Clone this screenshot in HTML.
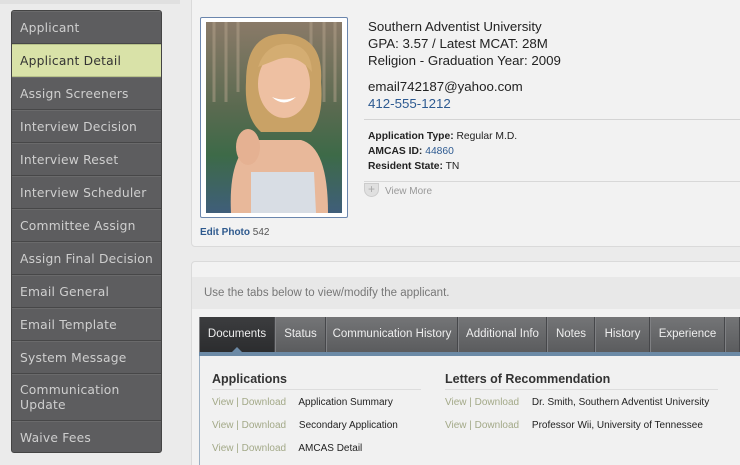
<!DOCTYPE html>
<html style="overflow:hidden;width:740px;height:465px"><head><style>
*{margin:0;padding:0;box-sizing:border-box}
body{width:740px;height:465px;overflow:hidden;background:#ebebeb;font-family:"Liberation Sans",Arial,sans-serif;position:relative}
.side{position:absolute;left:11px;top:10px;width:151px;height:443px;background:#5d5d5f;border:1px solid #444;border-radius:3px;overflow:hidden}
.side div{height:33px;border-bottom:1px solid #474748;border-top:1px solid #6a6a6b;color:#cfcfcf;font-family:"DejaVu Sans",sans-serif;font-size:12.3px;padding:9px 0 0 8px;letter-spacing:0.2px}
.side div.act{background:#d9e2a8;color:#333;border-color:#b8c28a}
.p1{position:absolute;left:191px;top:-4px;width:560px;height:251px;background:#f2f2f2;border:1px solid #dadada;border-radius:4px}
.p2{position:absolute;left:191px;top:261px;width:560px;height:220px;background:#f2f2f2;border:1px solid #dadada;border-radius:4px}
.hdr{position:absolute;left:192px;top:277px;width:548px;height:32px;background:#e8e8e8;color:#777;font-size:11.5px;padding:10px 0 0 12px}
.photo{position:absolute;left:200px;top:17px;width:148px;height:201px;border:1px solid #6b86ad;background:#fff;border-radius:2px}
.tabs{position:absolute;left:199px;top:317px;width:541px;height:36px;background:linear-gradient(#747577,#5a5b5d);display:flex}
.tabs span{color:#eee;font-size:11.5px;padding-top:11px;text-align:center;border-right:1px solid #46474a;border-left:1px solid #7f8083;height:36px;white-space:nowrap;flex:none}
.tabs span.a{background:linear-gradient(#3c3d3f,#2b2c2e);color:#eee}
.strip{position:absolute;left:199px;top:352px;width:541px;height:4px;background:#6c8aa6}
.cont{position:absolute;left:199px;top:356px;width:541px;height:110px;background:#f1f1f1;border-left:1px solid #9bb0c4}
h3{position:absolute;font-size:12.5px;color:#333;font-weight:bold}
.ln{position:absolute;height:1px;background:#ddd}
.r{position:absolute;font-size:10px;color:#222}
.r b{font-weight:normal;color:#a3a988;margin-right:10px}
.info{position:absolute;left:368px;font-size:13.3px;color:#222}
</style></head><body>
<div style="position:absolute;left:0;top:0;width:180px;height:4px;background:#e0e0e0"></div>
<div class="side">
<div>Applicant</div>
<div class="act">Applicant Detail</div>
<div>Assign Screeners</div>
<div>Interview Decision</div>
<div>Interview Reset</div>
<div>Interview Scheduler</div>
<div>Committee Assign</div>
<div>Assign Final Decision</div>
<div>Email General</div>
<div>Email Template</div>
<div>System Message</div>
<div style="height:47px;padding-top:8px;line-height:15px">Communication<br>Update</div>
<div style="border-bottom:none">Waive Fees</div>
</div>
<div class="p1"></div>
<div class="photo">
<svg width="136" height="191" style="position:absolute;left:5px;top:4px" viewBox="0 0 136 191">
<defs><linearGradient id="bg" x1="0" y1="0" x2="0" y2="1"><stop offset="0" stop-color="#8a7a68"/><stop offset="0.45" stop-color="#5a6a50"/><stop offset="0.7" stop-color="#3d6a48"/><stop offset="1" stop-color="#3f5e7a"/></linearGradient></defs>
<rect width="136" height="191" fill="url(#bg)"/>
<g stroke="#b4a38c" stroke-width="3" opacity="0.5"><line x1="8" y1="0" x2="8" y2="80"/><line x1="20" y1="0" x2="20" y2="80"/><line x1="32" y1="0" x2="32" y2="70"/><line x1="105" y1="0" x2="105" y2="80"/><line x1="118" y1="0" x2="118" y2="80"/><line x1="129" y1="0" x2="129" y2="80"/></g>
<path d="M25 191 Q22 130 50 118 L95 118 Q122 125 122 191Z" fill="#e8b89a"/>
<path d="M45 150 L108 150 L110 191 L45 191Z" fill="#d8dde4"/>
<path d="M40 60 Q40 10 80 12 Q118 15 115 60 Q118 95 105 110 L55 110 Q38 95 40 60Z" fill="#c9a266"/>
<ellipse cx="78" cy="62" rx="26" ry="34" fill="#eec0a2"/>
<path d="M52 45 Q60 20 85 22 Q105 25 106 50 Q90 30 70 38Z" fill="#d4ad72"/>
<path d="M66 75 Q78 86 90 75 Q78 80 66 75Z" fill="#fff"/>
<ellipse cx="42" cy="125" rx="12" ry="18" fill="#e5b192"/>
</svg>
</div>
<div style="position:absolute;left:200px;top:227px;font-size:10px;color:#2f5a8e;font-weight:bold">Edit Photo <span style="color:#555;font-weight:normal">542</span></div>
<div class="info" style="top:18px;line-height:17px">Southern Adventist University<br>GPA: 3.57 / Latest MCAT: 28M<br>Religion - Graduation Year: 2009</div>
<div class="info" style="top:78px;line-height:17px">email742187@yahoo.com<br><span style="color:#2d5a91">412-555-1212</span></div>
<div class="ln" style="left:364px;top:119px;width:376px;background:#d4d4d4"></div>
<div style="position:absolute;left:368px;top:129px;font-size:10.3px;color:#222;line-height:15px"><b>Application Type:</b> Regular M.D.<br><b>AMCAS ID:</b> <span style="color:#2d5a91">44860</span><br><b>Resident State:</b> TN</div>
<div class="ln" style="left:364px;top:181px;width:376px;background:#d8d8d8"></div>
<div style="position:absolute;left:364px;top:183px;width:15px;height:14px;border-radius:0 0 8px 8px;background:#e0e0e0;border:1px solid #ccc;color:#aaa;font-size:12px;text-align:center;line-height:11px">+</div>
<div style="position:absolute;left:385px;top:186px;font-size:10px;color:#999">View More</div>
<div class="p2"></div>
<div class="hdr">Use the tabs below to view/modify the applicant.</div>
<div class="tabs"><span class="a" style="width:76px">Documents</span><span style="width:51px">Status</span><span style="width:132px">Communication History</span><span style="width:89px">Additional Info</span><span style="width:48px">Notes</span><span style="width:55px">History</span><span style="width:75px">Experience</span><span style="width:15px"></span></div>
<div class="strip"></div>
<div style="position:absolute;left:231px;top:347px;width:0;height:0;border-left:6px solid transparent;border-right:6px solid transparent;border-bottom:6px solid #6c8aa6"></div>
<div class="cont"></div>
<h3 style="left:212px;top:372px">Applications</h3>
<h3 style="left:445px;top:372px">Letters of Recommendation</h3>
<div class="ln" style="left:212px;top:389px;width:209px"></div>
<div class="ln" style="left:445px;top:389px;width:273px"></div>
<div class="r" style="left:212px;top:397px"><b>View | Download</b> Application Summary</div>
<div class="r" style="left:212px;top:420px"><b>View | Download</b> Secondary Application</div>
<div class="r" style="left:212px;top:443px"><b>View | Download</b> AMCAS Detail</div>
<div class="r" style="left:445px;top:397px"><b>View | Download</b> Dr. Smith, Southern Adventist University</div>
<div class="r" style="left:445px;top:420px"><b>View | Download</b> Professor Wii, University of Tennessee</div>
</body></html>
